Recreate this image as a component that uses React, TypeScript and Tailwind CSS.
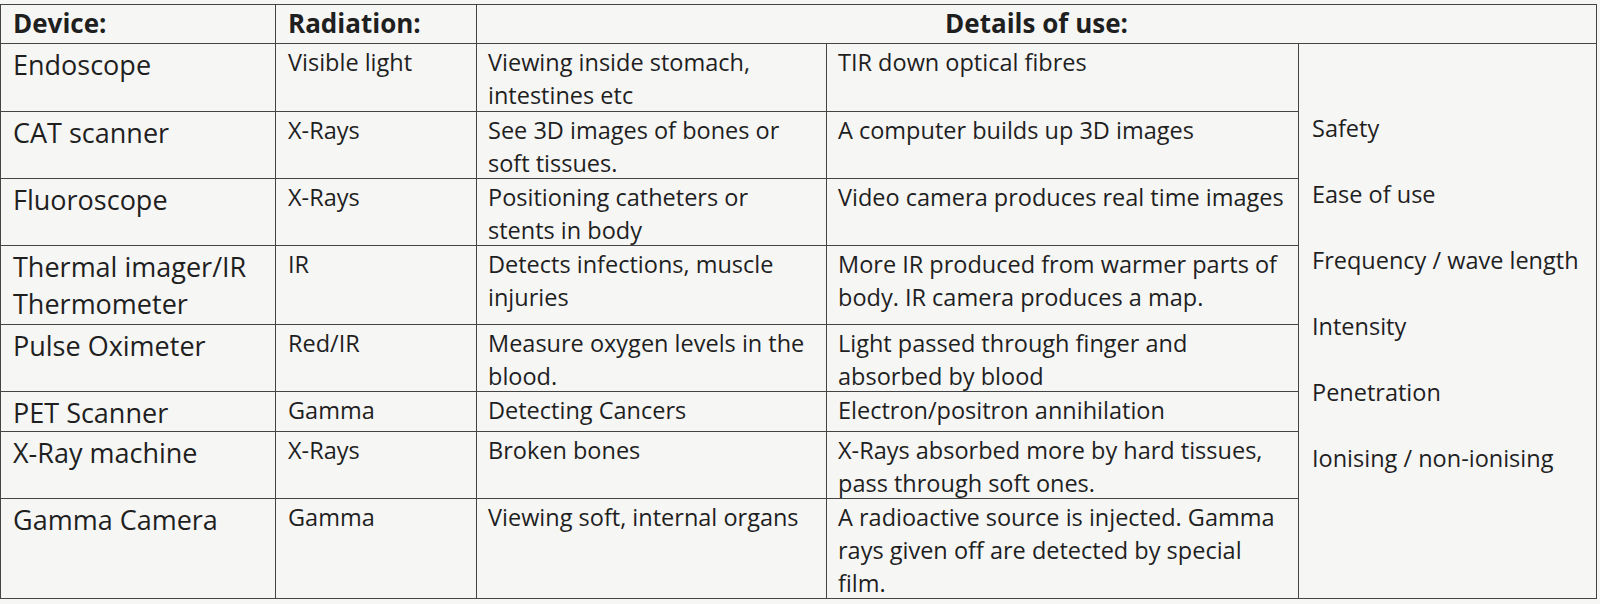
import React from "react";

type Row = {
  device: string[];
  radiation: string;
  use: string[];
  details: string[];
};

const rows: Row[] = [
  {
    device: ["Endoscope"],
    radiation: "Visible light",
    use: ["Viewing inside stomach,", "intestines etc"],
    details: ["TIR down optical fibres"],
  },
  {
    device: ["CAT scanner"],
    radiation: "X-Rays",
    use: ["See 3D images of bones or", "soft tissues."],
    details: ["A computer builds up 3D images"],
  },
  {
    device: ["Fluoroscope"],
    radiation: "X-Rays",
    use: ["Positioning catheters or", "stents in body"],
    details: ["Video camera produces real time images"],
  },
  {
    device: ["Thermal imager/IR", "Thermometer"],
    radiation: "IR",
    use: ["Detects infections, muscle", "injuries"],
    details: ["More IR produced from warmer parts of", "body. IR camera produces a map."],
  },
  {
    device: ["Pulse Oximeter"],
    radiation: "Red/IR",
    use: ["Measure oxygen levels in the", "blood."],
    details: ["Light passed through finger and", "absorbed by blood"],
  },
  {
    device: ["PET Scanner"],
    radiation: "Gamma",
    use: ["Detecting Cancers"],
    details: ["Electron/positron annihilation"],
  },
  {
    device: ["X-Ray machine"],
    radiation: "X-Rays",
    use: ["Broken bones"],
    details: ["X-Rays absorbed more by hard tissues,", "pass through soft ones."],
  },
  {
    device: ["Gamma Camera"],
    radiation: "Gamma",
    use: ["Viewing soft, internal organs"],
    details: [
      "A radioactive source is injected. Gamma",
      "rays given off are detected by special",
      "film.",
    ],
  },
];

const factors = [
  "Safety",
  "Ease of use",
  "Frequency / wave length",
  "Intensity",
  "Penetration",
  "Ionising / non-ionising",
];

const cell = "border-r border-b border-[#444444]";

function Lines({ lines }: { lines: string[] }) {
  return (
    <>
      {lines.map((l, i) => (
        <div key={i} className="whitespace-nowrap">
          {l}
        </div>
      ))}
    </>
  );
}

export default function App() {
  return (
    <div
      className="w-[1600px] h-[604px] bg-[#f6f6f5] pt-[4px] text-[#1f1f1f] overflow-hidden"
      style={{ fontFamily: '"Open Sans", "Noto Sans", sans-serif' }}
    >
      <div className="grid w-[1597px] grid-cols-[275px_201px_350px_472px_298px] grid-rows-[39px_68px_67px_67px_79px_67px_40px_67px_100px] border-l border-t border-[#444444]">
        <div className={`${cell} pl-[12px] text-[26px] font-bold leading-[36px]`}>Device:</div>
        <div className={`${cell} pl-[12px] text-[26px] font-bold leading-[36px]`}>Radiation:</div>
        <div className={`${cell} col-span-3 text-center text-[26px] font-bold leading-[36px]`}>
          Details of use:
        </div>

        {rows.map((r, i) => (
          <React.Fragment key={i}>
            <div className={`${cell} col-start-1 pl-[12px] pt-[2px] text-[27px] leading-[37px]`}>
              <Lines lines={r.device} />
            </div>
            <div className={`${cell} col-start-2 pl-[12px] pt-[2px] text-[23.5px] leading-[33px]`}>
              {r.radiation}
            </div>
            <div className={`${cell} col-start-3 pl-[11px] pt-[2px] text-[23.5px] leading-[33px]`}>
              <Lines lines={r.use} />
            </div>
            <div className={`${cell} col-start-4 pl-[11px] pt-[2px] text-[23.5px] leading-[33px]`}>
              <Lines lines={r.details} />
            </div>
            {i === 0 && (
              <div
                className={`${cell} col-start-5 row-start-2 row-span-8 flex flex-col gap-[33px] pl-[13px] pt-[68px] text-[23.5px] leading-[33px]`}
              >
                {factors.map((f) => (
                  <div key={f} className="whitespace-nowrap">
                    {f}
                  </div>
                ))}
              </div>
            )}
          </React.Fragment>
        ))}
      </div>
    </div>
  );
}
